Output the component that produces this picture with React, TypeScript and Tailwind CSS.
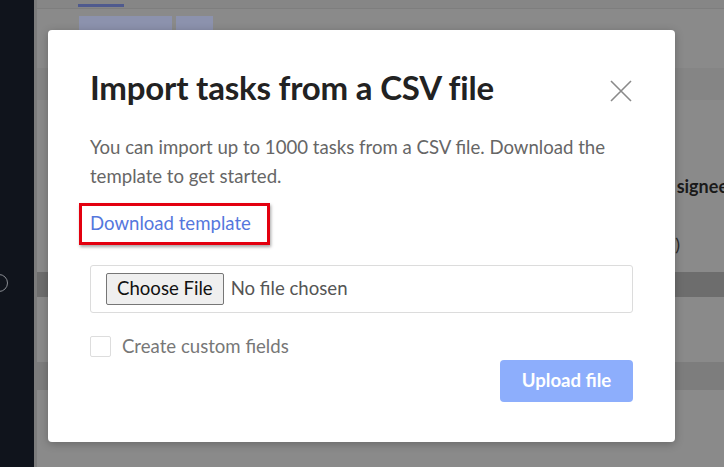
function Backdrop() {
  return (
    <div className="flex-1 flex flex-col bg-[#8a8a8a] border-l-[3px] border-[#7c7c7c]">
      <div className="h-[9px] border-b border-[#7e7e7e] bg-[#868686] pl-[41px] pt-[4px]">
        <div className="w-[46px] h-[3px] bg-[#4f5a8e]" />
      </div>
      <div className="flex gap-[4px] pl-[42px] pt-[7px]">
        <div className="w-[93px] h-[14px] bg-[#8c92ad]" />
        <div className="w-[37px] h-[14px] bg-[#8c92ad]" />
      </div>
      <div className="mt-[38px] h-[32px] bg-[#858585]" />
      <div className="h-[172px] flex flex-col items-end">
        <div className="mt-[77px] text-[18px] font-bold text-[#1a1a1a] leading-none mr-[-4px]">signee</div>
        <div className="mt-[40px] text-[18px] text-[#2a2a2a] leading-none mr-[44px]">)</div>
      </div>
      <div className="h-[25px] bg-[#6d6d6d]" />
      <div className="h-[65px]" />
      <div className="h-[28px] bg-[#7d7d7d]" />
      <div className="flex-1" />
    </div>
  );
}

export default function App() {
  return (
    <div
      className="relative w-[724px] h-[467px] overflow-hidden flex"
      style={{ fontFamily: "Lato, 'Open Sans', sans-serif" }}
    >
      <div className="w-[34px] bg-[#10141c] relative">
        <div className="absolute left-[-10px] top-[274px] w-[18px] h-[18px] rounded-full border border-[#8a8d93]" />
      </div>
      <Backdrop />

      <div className="absolute left-[48px] top-[30px] w-[627px] h-[412px] bg-white rounded-[4px] shadow-[0_2px_8px_rgba(0,0,0,0.25)] px-[42px] pt-[37px]">
        <div className="flex items-start justify-between">
          <h1 className="text-[33px] font-bold text-[#222] leading-[40px] tracking-[-0.2px]">
            Import tasks from a CSV file
          </h1>
          <button className="mt-[13px] mr-[1px] text-[#8a8a8a]">
            <svg width="22" height="22" viewBox="0 0 22 22" fill="none" stroke="currentColor" strokeWidth="1.6">
              <path d="M1 1L21 21M21 1L1 21" />
            </svg>
          </button>
        </div>

        <p className="mt-[26px] text-[18.6px] leading-[29px] text-[#666] w-[540px]">
          You can import up to 1000 tasks from a CSV file. Download the template to get started.
        </p>

        <div className="mt-[12px] ml-[-11px] w-[191px] h-[42px] border-[3px] border-[#e3000f] shadow-[1px_2px_3px_rgba(0,0,0,0.35)] flex items-center pl-[8px]">
          <span className="text-[18.6px] text-[#5577dd]">Download template</span>
        </div>

        <div className="mt-[20px] h-[48px] border border-[#dcdcdc] rounded-[3px] flex items-center pl-[15px] gap-[7px]">
          <span className="h-[32px] px-[10px] flex items-center bg-[#efefef] border border-[#767676] rounded-[2px] text-[18.6px] text-[#111]">
            Choose File
          </span>
          <span className="text-[18.6px] text-[#555]">No file chosen</span>
        </div>

        <div className="mt-[20px] flex items-center gap-[11px]">
          <div className="w-[21px] h-[21px] border border-[#dddddd] rounded-[2px]" />
          <span className="text-[18.6px] text-[#777]">Create custom fields</span>
        </div>

        <div className="flex justify-end mt-[-1px]">
          <button className="w-[133px] h-[42px] rounded-[4px] bg-[#8daefc] text-white text-[18.6px] font-bold">
            Upload file
          </button>
        </div>
      </div>
    </div>
  );
}
